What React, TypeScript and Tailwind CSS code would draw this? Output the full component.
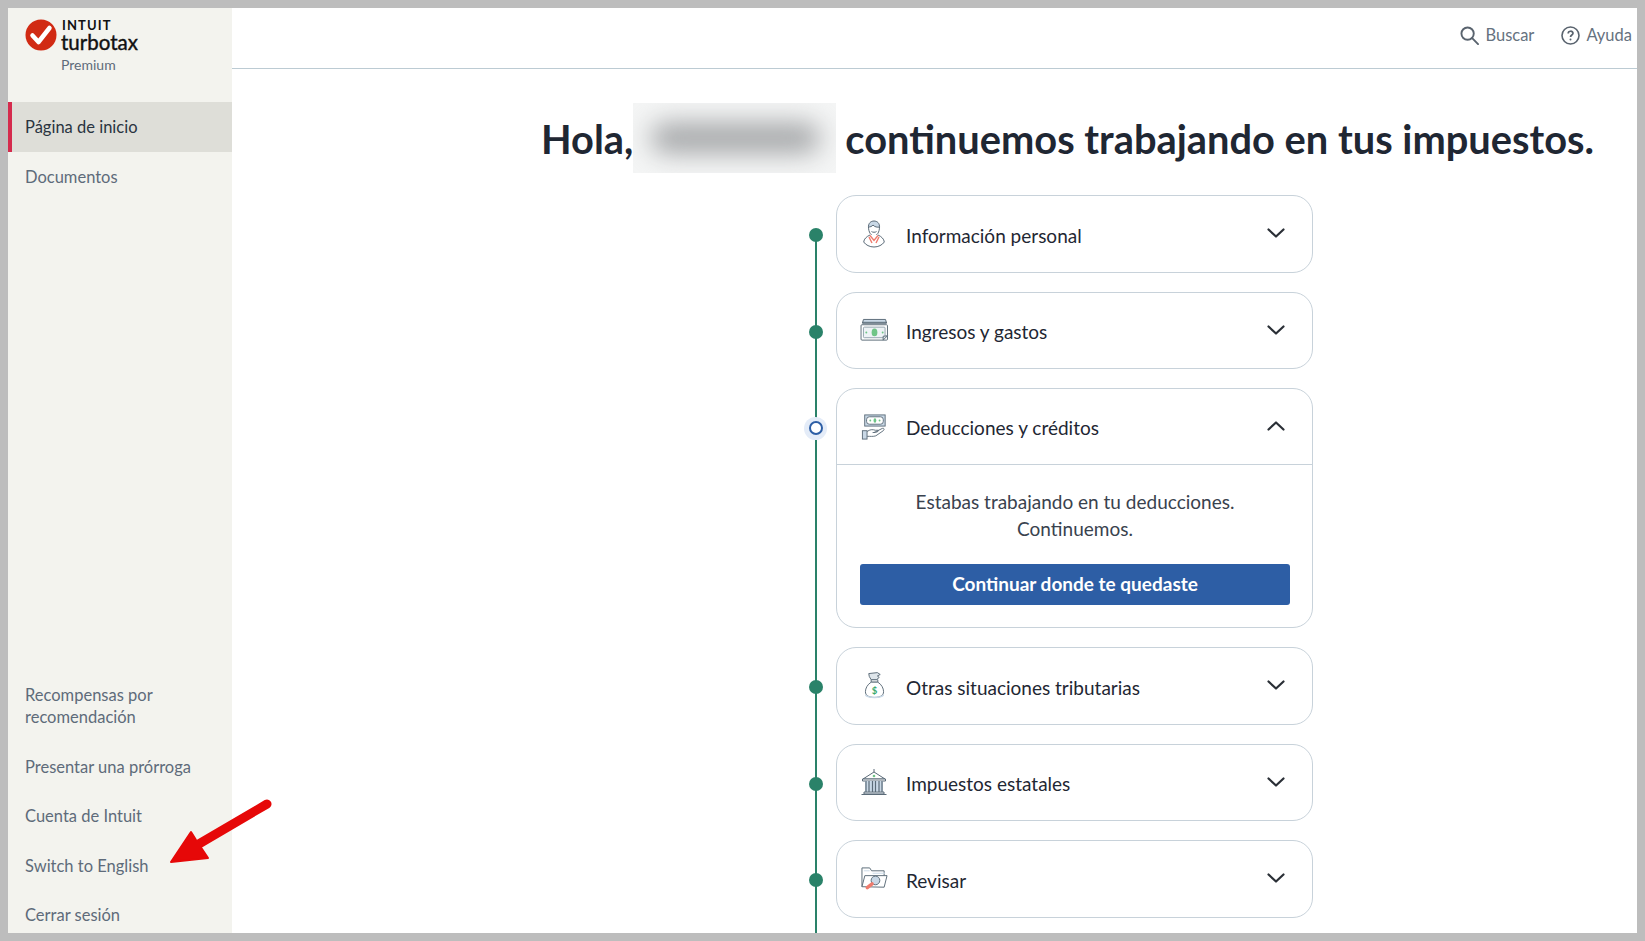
import React from "react";

const S = "#5b6b78";

const PersonIcon = () => (
  <svg width="22" height="28" viewBox="0 0 22 28" fill="none" stroke={S} strokeWidth="1">
    <path d="M5.500 8C5 3 8 1 11 1s6 2 5.500 7" fill="#c9d8e6" />
    <path d="M5.500 7c0 5 2.500 9 5.500 9s5.500-4 5.500-9c-2 .5-5 0-6.500-2-1 1.500-3 2-4.500 2z" fill="#fff" />
    <path d="M8.500 11.500c1 1 4 1 5 0" />
    <path d="M7 15C3.500 16.500 1 19 .7 22c2 3 6 5 10.300 5s8.300-2 10.300-5c-.3-3-2.800-5.500-6.300-7" fill="#fff" />
    <path d="M7 15.500l4 5 4-5M6 17l3 6M16 17l-3 6" stroke="#ef7b6d" strokeWidth="1.400" />
  </svg>
);

const CashIcon = () => (
  <svg width="29" height="25" viewBox="0 0 30 26" fill="none" stroke={S} strokeWidth="1">
    <path d="M3.500 1.500h23l1 4h-25z" fill="#c9d8e6" />
    <path d="M2 4.500h26" />
    <rect x="1" y="7" width="27.500" height="16" rx="1" fill="#fff" />
    <rect x="3.500" y="9.500" width="22.500" height="11" rx="1" fill="#eef3f6" stroke="#93a2ad" />
    <ellipse cx="15" cy="15" rx="3" ry="4" fill="#6fc587" stroke="none" />
    <circle cx="6.500" cy="15" r="1" fill="#6fc587" stroke="none" />
    <circle cx="23.500" cy="15" r="1" fill="#6fc587" stroke="none" />
    <path d="M24 23l4.500-4.500-4.500.500z" fill="#dfe6eb" />
  </svg>
);

const HandCashIcon = () => (
  <svg width="26" height="26" viewBox="0 0 28 28" fill="none" stroke={S} strokeWidth="1">
    <rect x="4" y="1" width="22" height="12" fill="#c9d8e6" />
    <rect x="6" y="3" width="18" height="8" rx="3" fill="#fff" />
    <ellipse cx="15" cy="7" rx="1.500" ry="2.500" fill="#6fc587" stroke="none" />
    <circle cx="10" cy="7" r="1" fill="#6fc587" stroke="none" />
    <circle cx="20" cy="7" r="1" fill="#6fc587" stroke="none" />
    <rect x="1.500" y="18" width="5" height="9" fill="#c9d8e6" />
    <path d="M6.500 19c3-2.500 6-2.500 9-1.500h3c1 1-1 2.500-6 2.500M14 20l9-4.500c2-.500 2.500 1 1 2.500l-8 5.500c-3 1-6 .5-9.500 .5" fill="#fff" />
  </svg>
);

const BagIcon = () => (
  <svg width="21" height="27" viewBox="0 0 22 28" fill="none" stroke={S} strokeWidth="1">
    <path d="M5 1.500l9-1 3 2-3 1.500 2 1.500-3 2.500H7.500L5.500 4.500z" fill="#dfe6eb" />
    <path d="M7.500 8h7v2.500h-7z" fill="#fff" />
    <path d="M7.500 10.500C3.500 13 1.500 17 1.500 20.500c0 4 3.500 6 9.500 6s9.500-2 9.500-6c0-3.500-2-7.500-6-10z" fill="#fff" />
    <path d="M1.500 24c3 3.500 16 3.500 19 0" stroke="#c9d8e6" strokeWidth="1.500" />
    <text x="11" y="23" textAnchor="middle" fontSize="10" fontWeight="700" fill="#39a96b" stroke="none" fontFamily="Lato, sans-serif">$</text>
  </svg>
);

const BankIcon = () => (
  <svg width="26" height="28" viewBox="0 0 26 28" fill="none" stroke={S} strokeWidth="1">
    <path d="M13 1v3M2 11L13 4l11 7z" fill="#fff" />
    <circle cx="13" cy="8" r="1.300" fill="#6fc587" stroke="none" />
    <path d="M1.500 11h23v2h-23z" fill="#fff" />
    <rect x="4" y="13" width="18" height="10.500" fill="#c9d8e6" stroke="none" />
    <path d="M5 13v11M8 13v11M11.500 13v11M14.500 13v11M18 13v11M21 13v11" strokeWidth="1.200" />
    <path d="M3 24h20v2H3z" fill="#dfe6eb" />
    <path d="M0.500 26.500h25" />
  </svg>
);

const FolderIcon = () => (
  <svg width="27" height="26" viewBox="0 0 28 26" fill="none" stroke={S} strokeWidth="1">
    <path d="M1 21V1.500h8l2 3h13v5" fill="#fff" />
    <path d="M3 4.500h6M12 7h13" stroke="#c9d8e6" />
    <path d="M1 21L4 9.500h23l-3 12z" fill="#fff" />
    <circle cx="15" cy="14.500" r="4.500" fill="#c9d8e6" />
    <path d="M11.500 18l-5 4" stroke="#ef7b6d" strokeWidth="3.500" strokeLinecap="round" />
  </svg>
);

const Chevron = ({ up }: { up?: boolean }) => (
  <svg width="18" height="10" viewBox="0 0 18 10" fill="none" stroke="#2a2f36" strokeWidth="2.200" strokeLinecap="round" strokeLinejoin="round">
    <path d={up ? "M1.500 8.500L9 1.500l7.500 7" : "M1.500 1.500L9 8.500l7.500-7"} />
  </svg>
);

const Header = ({ icon, label, up }: { icon: React.ReactNode; label: string; up?: boolean }) => (
  <div className={up ? "flex h-[75px] items-center pl-[21px] pr-[27px]" : "flex h-[75.500px] items-center pl-[21px] pr-[27px]"}>
    <div className="flex w-[32px] shrink-0 items-center justify-center">{icon}</div>
    <span className="ml-[16px] flex-1 pt-[4px] text-[19px] text-[#1f2733]">{label}</span>
    <div className="-mt-[1px]">
      <Chevron up={up} />
    </div>
  </div>
);

const Dot = () => <div className="h-[14px] w-[14px] rounded-full bg-[#2a8269]" />;

const ActiveDot = () => (
  <div className="flex h-[23px] w-[23px] items-center justify-center rounded-full bg-[#e4ecf8]">
    <div className="h-[14px] w-[14px] rounded-full border-[2.500px] border-[#2d5ea5] bg-white" />
  </div>
);

const Row = ({ active, children }: { active?: boolean; children: React.ReactNode }) => (
  <div className="relative flex">
    <div className="flex h-[77.500px] w-[40px] shrink-0 items-center justify-center pr-[1px] pt-[3px]">
      {active ? <ActiveDot /> : <Dot />}
    </div>
    <div className="w-[477px] rounded-[20px] border border-[#c8d2da] bg-white">{children}</div>
  </div>
);

export default function App() {
  return (
    <div className="relative flex h-[941px] w-[1645px] overflow-hidden border-[8px] border-[#bdbdbd] bg-white font-['Lato',sans-serif]">
      <aside className="flex w-[224px] shrink-0 flex-col bg-[#f3f3ee] text-[16.500px] text-[#5e6b7a]">
        <div className="h-[94px] shrink-0 pl-[17px] pt-[10px]">
          <div className="flex items-start">
            <svg width="32" height="32" viewBox="0 0 32 32" className="mt-[1px] shrink-0">
              <circle cx="16" cy="16" r="15.500" fill="#d12a13" />
              <path d="M7.500 16.500l6 6.500L24.500 9" fill="none" stroke="#fff" strokeWidth="4.500" strokeLinecap="round" strokeLinejoin="round" />
            </svg>
            <div className="ml-[4px] flex flex-col pt-[1px]">
              <span className="pl-[1px] text-[13px] font-bold leading-[13px] tracking-[1.100px] text-[#111]">INTUIT</span>
              <span className="text-[20.500px] leading-[20px] text-[#111] [-webkit-text-stroke:0.400px_#111]">turbotax</span>
              <span className="mt-[5px] text-[14px] leading-[16px] text-[#5e6b7a]">Premium</span>
            </div>
          </div>
        </div>
        <div className="flex h-[50px] shrink-0 items-center border-l-[4px] border-[#d52b4d] bg-[#deded8] pl-[13px] pt-[1px] text-[#2a3440]">Página de inicio</div>
        <div className="flex h-[49px] shrink-0 items-center pl-[17px] pt-[1px]">Documentos</div>
        <div className="mt-auto flex flex-col gap-[27.500px] pb-[7px] pl-[17px] leading-[22px]">
          <span>
            Recompensas por
            <br />
            recomendación
          </span>
          <span>Presentar una prórroga</span>
          <span>Cuenta de Intuit</span>
          <span>Switch to English</span>
          <span>Cerrar sesión</span>
        </div>
      </aside>

      <main className="flex min-w-0 flex-1 flex-col">
        <header className="flex h-[61px] shrink-0 items-center justify-end gap-[27px] border-b border-[#bccbd3] pb-[6px] pr-[5px] text-[16.500px] text-[#66727f]">
          <div className="flex items-center gap-[6px]">
            <svg width="19" height="19" viewBox="0 0 20 20" fill="none" stroke="#59636e" strokeWidth="2">
              <circle cx="8" cy="8" r="6.500" />
              <path d="M12.800 12.800L19 19" strokeLinecap="round" />
            </svg>
            <span>Buscar</span>
          </div>
          <div className="flex items-center gap-[6px]">
            <svg width="19" height="19" viewBox="0 0 19 19" fill="none" stroke="#59636e" strokeWidth="1.600">
              <circle cx="9.500" cy="9.500" r="8.500" />
              <path d="M7.200 7.500c0-3 4.800-3 4.800-.2 0 1.700-2.500 1.800-2.500 3.700" strokeWidth="1.700" />
              <circle cx="9.500" cy="13.600" r="1" fill="#59636e" stroke="none" />
            </svg>
            <span>Ayuda</span>
          </div>
        </header>

        <div className="mt-[34px] flex h-[70px] shrink-0 items-center justify-end pr-[43px] text-[39.800px] font-bold text-[#1f2733]">
          <span className="pt-[2px]">Hola,</span>
          <div className="relative mr-[9px] h-[70px] w-[203px] shrink-0 overflow-hidden bg-[#f4f5f5]">
            <div className="absolute left-[18px] right-[16px] top-[20px] h-[30px] rounded-full bg-[#a4a6a8] blur-[13px]" />
          </div>
          <span className="pt-[2px]">continuemos trabajando en tus impuestos.</span>
        </div>

        <div className="relative ml-[564px] mt-[22px] flex flex-1 flex-col gap-[19px]">
          <div className="absolute bottom-0 left-[18.500px] top-[40px] w-[2px] bg-[#2a8269]" />
          <Row>
            <Header icon={<PersonIcon />} label="Información personal" />
          </Row>
          <Row>
            <Header icon={<CashIcon />} label="Ingresos y gastos" />
          </Row>
          <Row active>
            <Header icon={<HandCashIcon />} label="Deducciones y créditos" up />
            <div className="border-t border-[#c8d2da] pb-[22px] pl-[23px] pr-[22px] pt-[23px] text-center">
              <p className="text-[19px] leading-[27px] text-[#39424e]">
                Estabas trabajando en tu deducciones.
                <br />
                Continuemos.
              </p>
              <div className="mt-[22px] flex h-[41px] items-center justify-center rounded-[3px] bg-[#2d5ea5] text-[19px] font-bold text-white">Continuar donde te quedaste</div>
            </div>
          </Row>
          <Row>
            <Header icon={<BagIcon />} label="Otras situaciones tributarias" />
          </Row>
          <Row>
            <Header icon={<BankIcon />} label="Impuestos estatales" />
          </Row>
          <Row>
            <Header icon={<FolderIcon />} label="Revisar" />
          </Row>
        </div>
      </main>

      <svg width="110" height="72" viewBox="0 0 110 72" className="absolute left-[160px] top-[790px]">
        <path d="M99 6L24 50" stroke="#e60808" strokeWidth="9" strokeLinecap="round" fill="none" />
        <path d="M3 64L23 34 28 42 40 60z" fill="#e60808" stroke="#e60808" strokeWidth="2" strokeLinejoin="round" />
      </svg>
    </div>
  );
}
